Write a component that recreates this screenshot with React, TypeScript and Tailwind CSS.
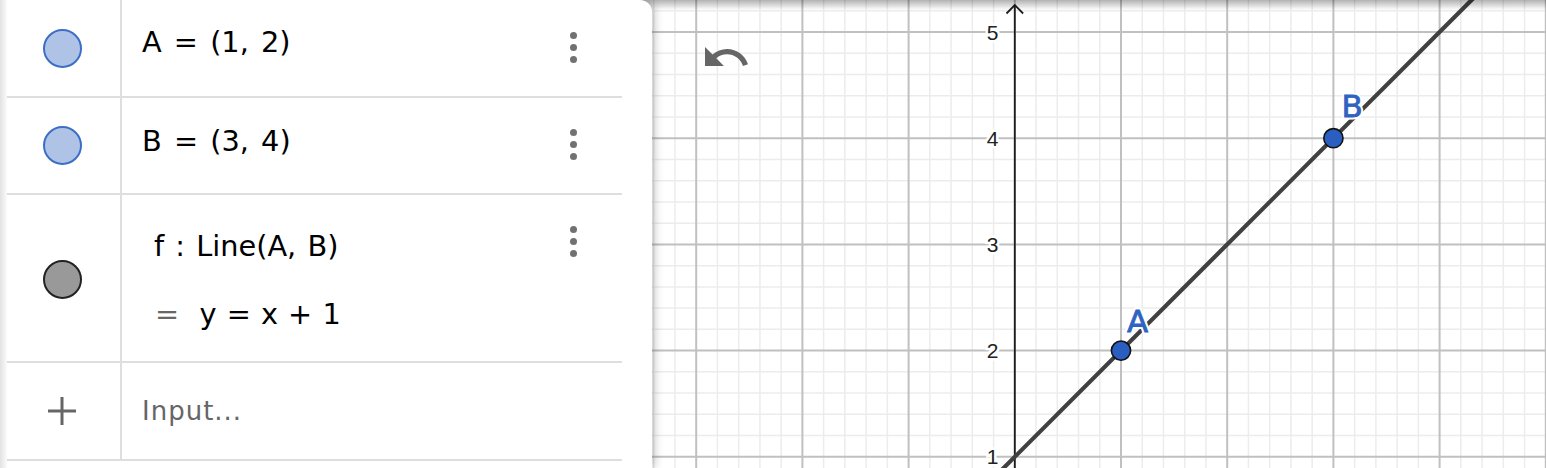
import React from "react";

const ORX = 1014.8;
const ORY = 563;
const U = 106.2;
const px = (x: number) => ORX + x * U;
const py = (y: number) => ORY - y * U;

function Graph() {
  const minorV: number[] = [];
  const majorV: number[] = [];
  for (let k = -40; k <= 40; k++) {
    const x = ORX + (k * U) / 5;
    if (x < 640 || x > 1560) continue;
    if (k % 5 === 0) majorV.push(x);
    else minorV.push(x);
  }
  const minorH: number[] = [];
  const majorH: number[] = [];
  for (let k = 0; k <= 40; k++) {
    const y = ORY - (k * U) / 5;
    if (y < -10 || y > 480) continue;
    if (k % 5 === 0) majorH.push(y);
    else minorH.push(y);
  }
  const ticks = [1, 2, 3, 4, 5];
  const labels = [
    { t: "A", x: 1127, y: 331.5 },
    { t: "B", x: 1341.5, y: 117 },
  ];
  return (
    <svg
      width={894}
      height={468}
      viewBox="652 0 894 468"
      className="block shrink-0"
    >
      <rect x={652} y={0} width={894} height={468} fill="#ffffff" />
      {minorV.map((x, i) => (
        <line key={"mv" + i} x1={x} y1={0} x2={x} y2={468} stroke="#ececec" strokeWidth={1.5} />
      ))}
      {minorH.map((y, i) => (
        <line key={"mh" + i} x1={640} y1={y} x2={1560} y2={y} stroke="#ececec" strokeWidth={1.5} />
      ))}
      {majorV.map((x, i) => (
        <line key={"Mv" + i} x1={x} y1={0} x2={x} y2={468} stroke="#c0c0c0" strokeWidth={2} />
      ))}
      {majorH.map((y, i) => (
        <line key={"Mh" + i} x1={640} y1={y} x2={1560} y2={y} stroke="#c0c0c0" strokeWidth={2} />
      ))}
      {/* y axis */}
      <line x1={ORX} y1={5} x2={ORX} y2={470} stroke="#1c1c1c" strokeWidth={1.8} />
      <polyline
        points={`${ORX - 8.3},13.5 ${ORX},5 ${ORX + 8.3},13.5`}
        fill="none"
        stroke="#1c1c1c"
        strokeWidth={1.8}
      />
      {ticks.map((t) => (
        <text
          key={t}
          x={992.5}
          y={py(t) + 7.6}
          textAnchor="middle"
          fontFamily="'Liberation Sans', Arial, sans-serif"
          fontSize={21}
          fill="#222222"
          stroke="#ffffff"
          strokeWidth={5}
          paintOrder="stroke"
        >
          {t}
        </text>
      ))}
      {/* line y = x + 1 */}
      <line
        x1={px(-1.5)}
        y1={py(-0.5)}
        x2={px(5)}
        y2={py(6)}
        stroke="#404040"
        strokeWidth={4.2}
      />
      {/* labels */}
      {labels.map((l) => (
        <g key={l.t} fontFamily="'DejaVu Sans', sans-serif" fontSize={31}>
          <text x={l.x} y={l.y} fill="#ffffff" stroke="#ffffff" strokeWidth={5} aria-hidden="true">
            {l.t}
          </text>
          <text x={l.x} y={l.y} fill="#2f62c2" stroke="#2f62c2" strokeWidth={0.8}>
            {l.t}
          </text>
        </g>
      ))}
      {/* points */}
      <circle cx={px(1)} cy={py(2)} r={9.6} fill="#2a5fc1" stroke="#111111" strokeWidth={1.6} />
      <circle cx={px(3)} cy={py(4)} r={9.6} fill="#2a5fc1" stroke="#111111" strokeWidth={1.6} />
      {/* undo icon */}
      <svg x={700.8} y={32.3} width={50.4} height={50.4} viewBox="0 0 24 24">
        <path
          d="M12.5 8c-2.65 0-5.05.99-6.9 2.6L2 7v9h9l-3.62-3.62c1.39-1.16 3.16-1.88 5.12-1.88 3.54 0 6.55 2.31 7.6 5.5l2.37-.78C21.08 11.03 17.15 8 12.5 8z"
          fill="#666666"
        />
      </svg>
    </svg>
  );
}

function Dots() {
  return (
    <div className="flex flex-col gap-[5px]">
      <div className="w-[7px] h-[7px] rounded-full bg-[#717171]" />
      <div className="w-[7px] h-[7px] rounded-full bg-[#717171]" />
      <div className="w-[7px] h-[7px] rounded-full bg-[#717171]" />
    </div>
  );
}

function BlueDot() {
  return (
    <div className="w-[39px] h-[39px] rounded-full bg-[#afc3e7] border-2 border-[#3d6ec6]" />
  );
}

function AlgebraPanel() {
  return (
    <div className="relative z-10 w-[652px] shrink-0 h-[468px] bg-white rounded-tr-[12px] shadow-[3px_0_9px_rgba(0,0,0,0.22)] flex font-['DejaVu_Sans',sans-serif] text-black">
      <div className="w-[7px] h-full bg-gradient-to-r from-[#e2e2e2] to-[#fbfbfb]" />
      <div className="w-[615px] flex flex-col">
        {/* Row A */}
        <div className="h-[98px] flex border-b-2 border-[#dedede]">
          <div className="w-[115px] border-r-2 border-[#dedede] pl-[36px] pt-[29px]">
            <BlueDot />
          </div>
          <div className="flex-1 flex justify-between pl-[20px] pr-[45px]">
            <div className="pt-[28px] text-[28.8px] leading-none whitespace-pre [word-spacing:3px]">A = (1, 2)</div>
            <div className="pt-[32px]">
              <Dots />
            </div>
          </div>
        </div>
        {/* Row B */}
        <div className="h-[97px] flex border-b-2 border-[#dedede]">
          <div className="w-[115px] border-r-2 border-[#dedede] pl-[36px] pt-[28px]">
            <BlueDot />
          </div>
          <div className="flex-1 flex justify-between pl-[20px] pr-[45px]">
            <div className="pt-[29px] text-[28.8px] leading-none whitespace-pre [word-spacing:3px]">B = (3, 4)</div>
            <div className="pt-[31px]">
              <Dots />
            </div>
          </div>
        </div>
        {/* Row f */}
        <div className="h-[168px] flex border-b-2 border-[#dedede]">
          <div className="w-[115px] border-r-2 border-[#dedede] pl-[36px] pt-[65px]">
            <div className="w-[39px] h-[39px] rounded-full bg-[#999999] border-2 border-[#222222]" />
          </div>
          <div className="flex-1 flex justify-between pl-[32px] pr-[45px]">
            <div className="flex flex-col">
              <div className="pt-[37px] text-[28.8px] leading-none whitespace-pre [word-spacing:2px]">f : Line(A, B)</div>
              <div className="pt-[39px] pl-[1px] text-[28.8px] leading-none whitespace-pre [word-spacing:1px]">
                <span className="text-[#666666]">=</span>  y = x + 1
              </div>
            </div>
            <div className="pt-[31px]">
              <Dots />
            </div>
          </div>
        </div>
        {/* Input row */}
        <div className="h-[98px] flex border-b-2 border-[#dedede]">
          <div className="w-[115px] border-r-2 border-[#dedede] flex items-center justify-center pr-[3px]">
            <svg width={32} height={32} viewBox="0 0 32 32">
              <path d="M16 2v28M2 16h28" stroke="#666666" strokeWidth={3} />
            </svg>
          </div>
          <div className="flex-1 pl-[20px] pt-[35px] text-[26px] leading-none tracking-[1px] text-[#666666]">Input...</div>
        </div>
      </div>
    </div>
  );
}

export default function App() {
  return (
    <div className="relative flex w-[1546px] h-[468px] overflow-hidden bg-white">
      <AlgebraPanel />
      <Graph />
      <div className="pointer-events-none absolute inset-x-0 top-0 h-[10px] bg-gradient-to-b from-[rgba(0,0,0,0.3)] to-transparent" />
    </div>
  );
}
